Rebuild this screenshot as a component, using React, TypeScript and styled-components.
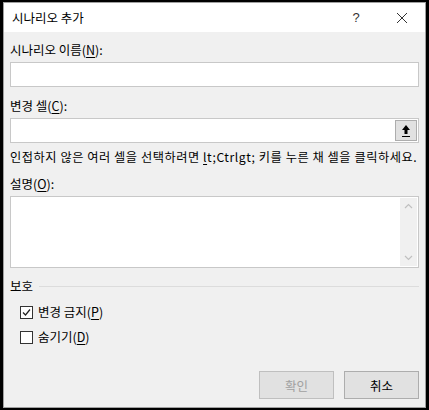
import React from "react";
import styled, { createGlobalStyle } from "styled-components";

const GlobalStyle = createGlobalStyle`
  html, body {
    margin: 0;
    padding: 0;
    background: #000;
  }
  body {
    font-family: "Noto Sans CJK KR", "Noto Sans", sans-serif;
    font-size: 12px;
    color: #000;
  }
`;

// Styled Components
const Frame = styled.div`
  width: 429px;
  height: 410px;
  box-sizing: border-box;
  border-style: solid;
  border-color: #000;
  border-width: 2px 3px 2px 3px;
  background: #000;
`;

const Window = styled.div`
  height: 100%;
  box-sizing: border-box;
  border: 1px solid #a0a0a0;
  background: #f0f0f0;
  display: flex;
  flex-direction: column;
`;

const TitleBar = styled.div`
  height: 29px;
  background: #fff;
  display: flex;
  align-items: center;
  padding-left: 8px;
  flex-shrink: 0;
`;

const TitleText = styled.div`
  flex: 1;
  font-size: 12.5px;
  color: #000;
`;

const TitleButton = styled.div`
  width: 46px;
  height: 29px;
  display: flex;
  align-items: center;
  justify-content: center;
  color: #333;
  font-family: "Liberation Sans", sans-serif;
  font-size: 13px;
`;

const Body = styled.div`
  flex: 1;
  display: flex;
  flex-direction: column;
  padding: 10px 6px 0 6px;
`;

const Label = styled.div<{ $top?: number }>`
  font-size: 12.5px;
  line-height: 16px;
  margin-top: ${(p) => p.$top ?? 0}px;
  color: #000;
`;

const Key = styled.span`
  text-decoration: underline;
  text-underline-offset: 2px;
`;

const Input = styled.div<{ $top?: number }>`
  height: 23px;
  margin-top: ${(p) => p.$top ?? 0}px;
  background: #fff;
  border: 1px solid #c8c8c8;
  display: flex;
  justify-content: flex-end;
`;

const RefButton = styled.div`
  width: 20px;
  margin: 1px;
  background: #e1e1e1;
  border: 1px solid #adadad;
  display: flex;
  align-items: center;
  justify-content: center;
`;

const Hint = styled.div`
  margin-top: 6px;
  font-size: 12.2px;
  line-height: 16px;
  white-space: nowrap;
  letter-spacing: 0.56px;
`;

const TextArea = styled.div`
  height: 70px;
  margin-top: 4px;
  background: #fff;
  border: 1px solid #c8c8c8;
  display: flex;
  justify-content: flex-end;
`;

const ScrollBar = styled.div`
  width: 17px;
  margin: 1px;
  background: #f0f0f0;
  display: flex;
  flex-direction: column;
  justify-content: space-between;
  align-items: center;
  padding: 5px 0;
`;

const GroupHead = styled.div`
  display: flex;
  align-items: center;
  gap: 6px;
  margin-top: 10px;
  line-height: 16px;
  font-size: 12.5px;
`;

const GroupLine = styled.div`
  flex: 1;
  height: 1px;
  background: #dcdcdc;
`;

const CheckRow = styled.label<{ $top: number }>`
  display: flex;
  align-items: center;
  gap: 5px;
  margin-left: 10px;
  margin-top: ${(p) => p.$top}px;
  line-height: 16px;
  font-size: 12.5px;
`;

const Box = styled.span`
  width: 11px;
  height: 11px;
  border: 1px solid #333;
  background: #fff;
  display: flex;
  align-items: center;
  justify-content: center;
`;

const Footer = styled.div`
  display: flex;
  justify-content: flex-end;
  gap: 10px;
  margin-top: auto;
  padding-bottom: 8px;
`;

const Button = styled.div<{ $disabled?: boolean }>`
  width: 73px;
  height: 26px;
  box-sizing: content-box;
  background: #e1e1e1;
  border: 1px solid ${(p) => (p.$disabled ? "#bfbfbf" : "#adadad")};
  color: ${(p) => (p.$disabled ? "#a0a0a0" : "#000")};
  display: flex;
  align-items: center;
  justify-content: center;
  font-size: 12.5px;
`;

const CloseIcon = () => (
  <svg width="12" height="12" viewBox="0 0 12 12">
    <path d="M1 1 L11 11 M11 1 L1 11" stroke="#333" strokeWidth="1" fill="none" />
  </svg>
);

const UpArrowIcon = () => (
  <svg width="10" height="14" viewBox="0 0 10 14">
    <path d="M5 1 L9 6 L6.5 6 L6.5 10 L3.5 10 L3.5 6 L1 6 Z" fill="#000" />
    <rect x="1" y="12" width="8" height="1" fill="#000" />
  </svg>
);

const Chevron = ({ up }: { up: boolean }) => (
  <svg width="9" height="6" viewBox="0 0 9 6">
    <path
      d={up ? "M1 5 L4.5 1.5 L8 5" : "M1 1 L4.5 4.5 L8 1"}
      stroke="#c0c0c0"
      strokeWidth="1.2"
      fill="none"
    />
  </svg>
);

const CheckMark = () => (
  <svg width="9" height="9" viewBox="0 0 9 9">
    <path d="M1 4.5 L3.5 7 L8 1.5" stroke="#222" strokeWidth="1.2" fill="none" />
  </svg>
);

const App: React.FC = () => {
  return (
    <>
      <GlobalStyle />
      <Frame>
        <Window>
          <TitleBar>
            <TitleText>시나리오 추가</TitleText>
            <TitleButton>?</TitleButton>
            <TitleButton>
              <CloseIcon />
            </TitleButton>
          </TitleBar>
          <Body>
            <Label>
              시나리오 이름(<Key>N</Key>):
            </Label>
            <Input $top={4} />
            <Label $top={11}>
              변경 셀(<Key>C</Key>):
            </Label>
            <Input $top={4}>
              <RefButton>
                <UpArrowIcon />
              </RefButton>
            </Input>
            <Hint>
              인접하지 않은 여러 셀을 선택하려면 <Key>l</Key>t;Ctrlgt; 키를 누른 채 셀을 클릭하세요.
            </Hint>
            <Label $top={11}>
              설명(<Key>O</Key>):
            </Label>
            <TextArea>
              <ScrollBar>
                <Chevron up />
                <Chevron up={false} />
              </ScrollBar>
            </TextArea>
            <GroupHead>
              보호
              <GroupLine />
            </GroupHead>
            <CheckRow $top={10}>
              <Box>
                <CheckMark />
              </Box>
              <span>
                변경 금지(<Key>P</Key>)
              </span>
            </CheckRow>
            <CheckRow $top={9}>
              <Box />
              <span>
                숨기기(<Key>D</Key>)
              </span>
            </CheckRow>
            <Footer>
              <Button $disabled>확인</Button>
              <Button>취소</Button>
            </Footer>
          </Body>
        </Window>
      </Frame>
    </>
  );
};

export default App;
